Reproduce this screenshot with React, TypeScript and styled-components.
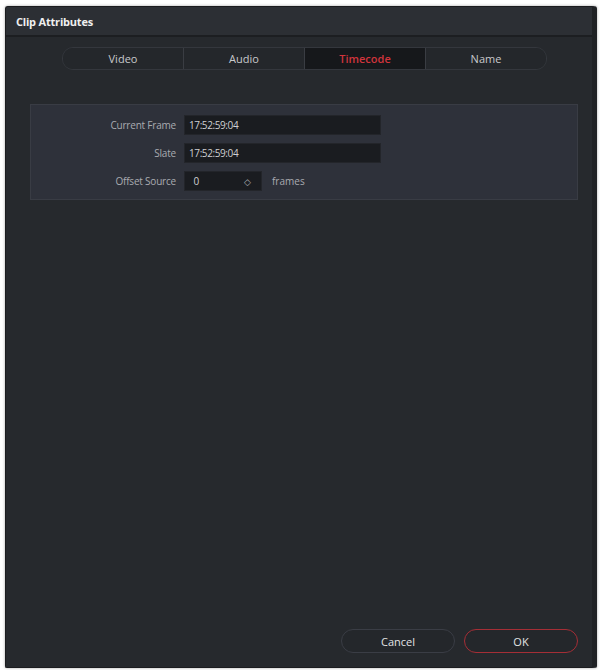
import styled, { createGlobalStyle } from 'styled-components'

const Global = createGlobalStyle`
  html, body {
    margin: 0;
    padding: 0;
    background: #ffffff;
  }
  body {
    font-family: "Open Sans", "Noto Sans", sans-serif;
  }
`

const Page = styled.div`
  width: 601px;
  height: 670px;
  padding: 6px 4px 4px 5px;
  box-sizing: border-box;
`

const Window = styled.div`
  height: 100%;
  display: flex;
  flex-direction: column;
  background: #26292d;
  border: 1px solid #1b1c1f;
  border-right: 5px solid #1f2124;
  border-radius: 3px 3px 2px 2px;
  box-shadow: 0 0 3px rgba(0, 0, 0, 0.35);
  overflow: hidden;
`

const TitleBar = styled.div`
  height: 28px;
  display: flex;
  align-items: center;
  padding: 0 10px;
  background: #2c2f34;
  border-bottom: 2px solid #1c1e21;
  color: #f0f0f0;
  font-size: 11px;
  font-weight: 700;
  letter-spacing: -0.2px;
`

const Body = styled.div`
  flex: 1;
  display: flex;
  flex-direction: column;
  padding: 10px 14px 14px 24px;
`

const Tabs = styled.div`
  align-self: center;
  margin-left: 1px;
  display: flex;
  width: 483px;
  height: 21px;
  border: 1px solid #34373d;
  border-radius: 11px;
  overflow: hidden;
`

const Tab = styled.div<{ $active?: boolean }>`
  flex: 1;
  display: flex;
  align-items: center;
  justify-content: center;
  font-size: 11px;
  color: ${(p) => (p.$active ? '#d0343c' : '#c8c9cc')};
  font-weight: ${(p) => (p.$active ? 600 : 400)};
  background: ${(p) => (p.$active ? '#16181b' : '#24272b')};
  & + & {
    border-left: 1px solid #3a3d43;
  }
`

const Panel = styled.div`
  margin-top: 34px;
  height: 96px;
  box-sizing: border-box;
  background: #2e313a;
  border: 1px solid #393c44;
  display: grid;
  grid-template-columns: 145px auto;
  grid-auto-rows: 20px;
  row-gap: 8px;
  align-content: start;
  align-items: center;
  column-gap: 8px;
  padding-top: 10px;
`

const Label = styled.div`
  font-size: 10px;
  color: #a9abb0;
  text-align: right;
  white-space: nowrap;
  letter-spacing: -0.2px;
`

const Field = styled.div<{ $w: number }>`
  width: ${(p) => p.$w}px;
  height: 20px;
  box-sizing: border-box;
  background: #1a1c20;
  border: 1px solid #23252a;
  display: flex;
  align-items: center;
  padding: 0 4px;
  font-size: 10px;
  color: #cfd0d3;
  letter-spacing: -0.4px;
`

const Inline = styled.div`
  display: flex;
  align-items: center;
  gap: 10px;
`

const Spin = styled.span`
  margin-left: auto;
  margin-right: 6px;
  color: #b0b2b6;
  font-size: 9px;
`

const Unit = styled.span`
  font-size: 10px;
  color: #a9abb0;
`

const Spacer = styled.div`
  flex: 1;
`

const Footer = styled.div`
  display: flex;
  justify-content: flex-end;
  gap: 9px;
`

const Button = styled.div<{ $primary?: boolean }>`
  width: 114px;
  height: 24px;
  box-sizing: border-box;
  border-radius: 12px;
  border: 1.5px solid ${(p) => (p.$primary ? '#a52e36' : '#3a3d45')};
  background: #24272b;
  display: flex;
  align-items: center;
  justify-content: center;
  font-size: 11px;
  color: #e2e3e5;
`

export default function App() {
  return (
    <Page>
      <Global />
      <Window>
        <TitleBar>Clip Attributes</TitleBar>
        <Body>
          <Tabs>
            <Tab>Video</Tab>
            <Tab>Audio</Tab>
            <Tab $active>Timecode</Tab>
            <Tab>Name</Tab>
          </Tabs>
          <Panel>
            <Label>Current Frame</Label>
            <Field $w={197}>17:52:59:04</Field>
            <Label>Slate</Label>
            <Field $w={197}>17:52:59:04</Field>
            <Label>Offset Source</Label>
            <Inline>
              <Field $w={78}>
                &nbsp;&nbsp;0<Spin>◇</Spin>
              </Field>
              <Unit>frames</Unit>
            </Inline>
          </Panel>
          <Spacer />
          <Footer>
            <Button>Cancel</Button>
            <Button $primary>OK</Button>
          </Footer>
        </Body>
      </Window>
    </Page>
  )
}
